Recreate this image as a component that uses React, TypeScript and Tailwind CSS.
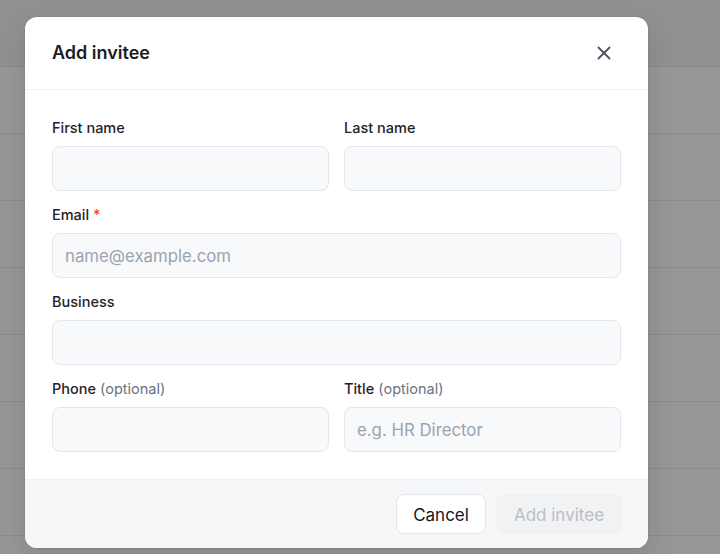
import React from "react";
import { X } from "lucide-react";

function Field({
  label,
  optional,
  required,
  placeholder,
  className = "",
}: {
  label: string;
  optional?: boolean;
  required?: boolean;
  placeholder?: string;
  className?: string;
}) {
  return (
    <div className={"flex flex-col " + className}>
      <label className="text-[14.5px] leading-[20px] font-medium text-[#1f2328] mb-[8px]">
        {label}
        {optional && <span className="font-normal text-[#6b7280]"> (optional)</span>}
        {required && <span className="text-[#ef4444]"> *</span>}
      </label>
      <input
        placeholder={placeholder}
        className="h-[45px] w-full rounded-[8px] border border-[#e3e6ea] bg-[#f8f9fb] px-[12px] text-[16.8px] text-[#111827] placeholder:text-[#9aa3b0] outline-none"
      />
    </div>
  );
}

export default function App() {
  const rows = [0, 1, 2, 3, 4, 5, 6, 7];
  return (
    <div
      className="relative w-[720px] h-[554px] overflow-hidden bg-[#979797]"
      style={{ fontFamily: "Inter, 'Noto Sans', sans-serif" }}
    >
      <div className="flex flex-col">
        <div className="h-[67px] bg-[#909193] border-b border-[#8a8b8c]" />
        {rows.map((r) => (
          <div key={r} className="h-[67px] border-b border-[#8d8d8d]" />
        ))}
      </div>

      <div className="absolute left-[25px] top-[17px] w-[623px] h-[531px] rounded-[12px] bg-white shadow-[0_0_0_1px_rgba(0,0,0,0.04),0_10px_30px_rgba(0,0,0,0.12)] overflow-hidden flex flex-col">
        <div className="h-[73px] shrink-0 flex items-center justify-between pl-[27px] pr-[33px] border-b border-[#eef0f2]">
          <h2 className="text-[18px] font-semibold text-[#1a1d21] leading-[28px]">Add invitee</h2>
          <X size={22} strokeWidth={2} className="text-[#4b5563]" />
        </div>

        <div className="flex-1 px-[27px] pt-[28px] flex flex-col gap-[14px]">
          <div className="grid grid-cols-2 gap-x-[15px]">
            <Field label="First name" />
            <Field label="Last name" />
          </div>
          <Field label="Email" required placeholder="name@example.com" />
          <Field label="Business" />
          <div className="grid grid-cols-2 gap-x-[15px]">
            <Field label="Phone" optional />
            <Field label="Title" optional placeholder="e.g. HR Director" />
          </div>
        </div>

        <div className="h-[69px] shrink-0 bg-[#f6f7f9] border-t border-[#eef0f2] flex items-center justify-end gap-[10px] pr-[26px]">
          <button className="h-[40px] w-[90px] pt-[3px] rounded-[8px] border border-[#e3e6ea] bg-white text-[17px] text-[#111827]">
            Cancel
          </button>
          <button className="h-[40px] w-[126px] pt-[3px] rounded-[8px] bg-[#f1f2f4] text-[17px] text-[#b9bec6]">
            Add invitee
          </button>
        </div>
      </div>
    </div>
  );
}
